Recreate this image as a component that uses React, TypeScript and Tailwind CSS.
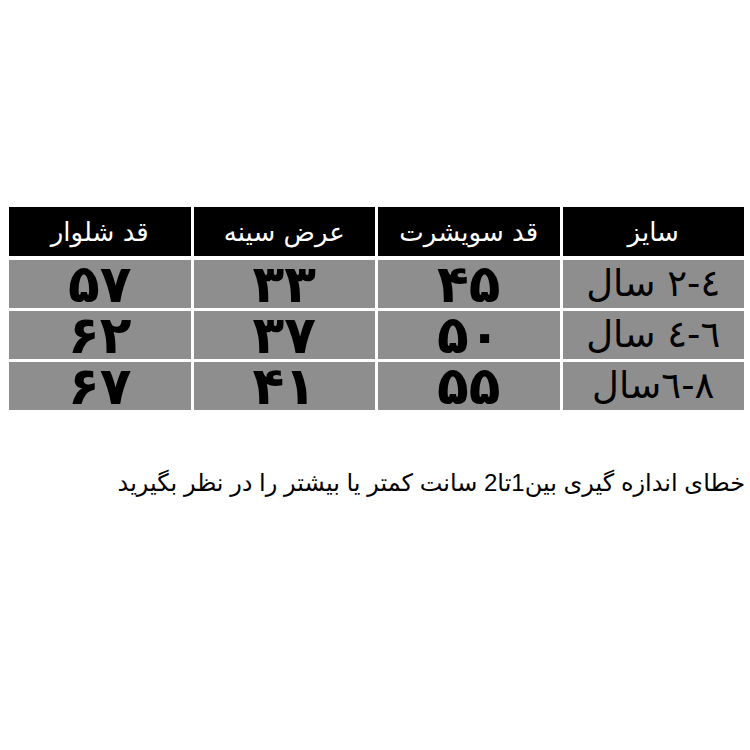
const headers = ["سایز", "قد سویشرت", "عرض سینه", "قد شلوار"];

const rows = [
  ["٤-٢ سال", "۴۵", "۳۳", "۵۷"],
  ["٦-٤ سال", "۵۰", "۳۷", "۶۲"],
  ["٨-٦سال", "۵۵", "۴۱", "۶۷"],
];

export default function App() {
  return (
    <div
      dir="rtl"
      className="w-[750px] h-[750px] bg-white overflow-hidden"
      style={{ fontFamily: '"DejaVu Sans", sans-serif' }}
    >
      <div className="pt-[207px] pr-[6px] pl-[9px]">
        <div className="grid grid-cols-4 gap-x-[3px] h-[49px]">
          {headers.map((h) => (
            <div
              key={h}
              className="bg-black text-white flex items-center justify-center text-[26px] leading-none"
            >
              {h}
            </div>
          ))}
        </div>
        <div className="mt-[4px] flex flex-col gap-[3px]">
          {rows.map((r) => (
            <div key={r[0]} className="grid grid-cols-4 grid-rows-[48px] gap-x-[3px] h-[48px]">
              {r.map((c, i) => (
                <div
                  key={i}
                  className={
                    i === 0
                      ? "h-[48px] bg-[#8e8e8e] text-black flex items-center justify-center text-[37px] leading-[40px]"
                      : "h-[48px] bg-[#8e8e8e] text-black flex items-center justify-center text-[52px] font-bold leading-[40px]"
                  }
                >
                  {c}
                </div>
              ))}
            </div>
          ))}
        </div>
      </div>
      <p
        className="mt-[61px] pr-[5px] text-[24px] text-black leading-none"
        style={{ fontFamily: '"Liberation Sans", "DejaVu Sans", sans-serif' }}
      >
        خطای اندازه گیری بین1تا2 سانت کمتر یا بیشتر را در نظر بگیرید
      </p>
    </div>
  );
}
